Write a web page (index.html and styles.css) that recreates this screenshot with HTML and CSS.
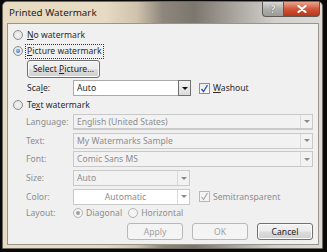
FILE: index.html
```html
<!DOCTYPE html>
<html>
<head>
<meta charset="utf-8">
<link rel="stylesheet" href="styles.css">
</head>
<body>
<div class="screen">
  <div class="window">
    <div class="titlebar">
      <span class="title">Printed Watermark</span>
      <div class="caption-btns">
        <span class="cbtn help">?</span>
        <span class="cbtn close">
          <svg width="10" height="8" viewBox="0 0 10 8"><path d="M1.5 1 L8.5 7 M8.5 1 L1.5 7" stroke="#fff" stroke-width="2.2" stroke-linecap="round"/></svg>
        </span>
      </div>
    </div>
    <div class="client">
      <div class="row r-no">
        <span class="radio"></span><span class="lbl"><u>N</u>o watermark</span>
      </div>
      <div class="row r-pic">
        <span class="radio on"></span><span class="lbl focus"><u>P</u>icture watermark</span>
      </div>
      <div class="indent">
        <button class="btn select">Select <u>P</u>icture...</button>
        <div class="row r-scale">
          <span class="flabel">Sca<u>l</u>e:</span>
          <div class="combo scale"><span class="ctext">Auto</span><span class="arrow boxed"><i></i></span></div>
          <span class="check on"><svg width="9" height="9" viewBox="0 0 9 9"><path d="M1.5 5 L3.5 7.5 L7.5 1" fill="none" stroke="#2a55b8" stroke-width="1.3"/></svg></span>
          <span class="lbl"><u>W</u>ashout</span>
        </div>
      </div>
      <div class="row r-text">
        <span class="radio"></span><span class="lbl">Te<u>x</u>t watermark</span>
      </div>
      <div class="fields">
        <span class="flabel dis">Language:</span>
        <div class="combo dis wide lang"><span class="ctext">English (United States)</span><span class="arrow"><i></i></span></div>
        <span class="flabel dis">Text:</span>
        <div class="combo dis wide"><span class="ctext">My Watermarks Sample</span><span class="arrow"><i></i></span></div>
        <span class="flabel dis">Font:</span>
        <div class="combo dis wide"><span class="ctext">Comic Sans MS</span><span class="arrow"><i></i></span></div>
        <span class="flabel dis">Size:</span>
        <div class="combo dis narrow"><span class="ctext">Auto</span><span class="arrow"><i></i></span></div>
        <span class="flabel dis">Color:</span>
        <div class="colorrow">
          <div class="combo dis narrow white"><span class="ctext center">Automatic</span><span class="arrow"><i></i></span></div>
          <span class="check dis"><svg width="9" height="9" viewBox="0 0 9 9"><path d="M1.5 5 L3.5 7.5 L7.5 1" fill="none" stroke="#a8a8a8" stroke-width="1.2"/></svg></span>
          <span class="lbl dis">Semitransparent</span>
        </div>
        <span class="flabel dis">Layout:</span>
        <div class="layoutrow">
          <span class="radio dis on"></span><span class="lbl dis">Diagonal</span>
          <span class="radio dis"></span><span class="lbl dis">Horizontal</span>
        </div>
      </div>
      <div class="actions">
        <button class="btn act dis">Apply</button>
        <button class="btn act dis">OK</button>
        <button class="btn act">Cancel</button>
      </div>
    </div>
  </div>
</div>
</body>
</html>
```
FILE: styles.css
```css
* { box-sizing: border-box; }
html, body { margin: 0; padding: 0; }
body {
  width: 327px; height: 252px; overflow: hidden;
  font-family: "Noto Sans", "Open Sans", sans-serif;
  font-size: 8.6px; line-height: 12px; color: #2a2a2a;
}
u { text-decoration: underline; text-underline-offset: 1px; }
.screen {
  width: 327px; height: 252px; background: #0a0a0a;
  padding: 1px 4px 3px 2px;
}
.window {
  width: 321px; height: 248px;
  border-radius: 5px 5px 0 0;
  background: linear-gradient(90deg, #e8dcc3 0%, #e6dac2 32%, #cfc3ad 42%, #8e877c 50%, #7b766e 60%, #a7a39c 72%, #d2d0cc 85%, #dcdbd8 100%);
  border: 1px solid #6e6a63;
  padding: 0 3px 3px 4px;
  display: flex; flex-direction: column;
}
.titlebar {
  height: 21px; flex: none;
  display: flex; align-items: flex-start; justify-content: space-between;
}
.title {
  font-size: 9.8px; color: #1d1d1d; margin: 5px 0 0 2px;
}
.caption-btns { display: flex; margin-right: -1px; }
.cbtn {
  height: 15px; display: flex; align-items: center; justify-content: center;
  border: 1px solid #5d5a56; border-top: none;
}
.help {
  width: 22px; border-radius: 0 0 0 4px;
  background: linear-gradient(#d8d8d8, #b0aeab 50%, #9e9c99);
  color: #eaeaea; font-weight: bold; font-size: 10px;
  text-shadow: 0 0 1px #333;
}
.close {
  width: 36px; border-left: none; border-radius: 0 0 4px 0;
  background: linear-gradient(#e9a591, #d0563a 50%, #bb3518);
}
.client {
  flex: 1;
  background: #f0f0f0;
  border: 1px solid #9a958c;
  padding: 5px 0 0 5px;
  display: flex; flex-direction: column;
}
.row { display: flex; align-items: center; }
.radio {
  width: 10px; height: 10px; border-radius: 50%;
  border: 1px solid #8e8f8f;
  background: radial-gradient(circle at 50% 50%, #f4f4f4 0%, #dcdcdc 100%);
  flex: none; margin-right: 4px; position: relative;
}
.radio.on::after {
  content: ""; position: absolute; left: 2px; top: 2px;
  width: 4px; height: 4px; border-radius: 50%;
  background: radial-gradient(circle at 40% 40%, #8ec6ff, #1d5fb5);
}
.radio.dis { border-color: #b5b5b5; background: #f4f4f4; }
.radio.dis.on::after { background: #a0a0a0; }
.r-no { height: 12px; }
.r-pic { height: 14px; margin-top: 3px; }
.focus { outline: 1px dotted #333; outline-offset: 0; padding: 0 1px; margin-left: -1px; line-height: 13px; }
.indent { padding-left: 14px; display: flex; flex-direction: column; }
.btn {
  font-family: inherit; font-size: 8.6px; line-height: 12px; color: #222;
  border: 1px solid #707070; border-radius: 3px;
  background: linear-gradient(#f2f2f2 0%, #ebebeb 48%, #dddddd 52%, #cfcfcf 100%);
  padding: 0; box-shadow: inset 0 0 0 1px #fbfbfb;
}
.select { width: 73px; height: 18px; margin-top: 2px; }
.r-scale { height: 16px; margin-top: 2px; }
.flabel { width: 46px; flex: none; }
.r-scale .flabel { width: 46px; }
.combo {
  height: 16px; display: flex; align-items: stretch;
  border: 1px solid #a9a9a9; background: #fff;
}
.combo .ctext { flex: 1; padding-left: 3px; line-height: 14px; white-space: nowrap; overflow: hidden; }
.combo .ctext.center { text-align: center; padding-left: 0; }
.arrow {
  width: 12px; flex: none; display: flex; align-items: center; justify-content: center;
  border-left: 1px solid #d0d0d0;
}
.arrow i {
  width: 0; height: 0; border-left: 3px solid transparent; border-right: 3px solid transparent;
  border-top: 3px solid #8a8a8a;
}
.arrow.boxed {
  border: 1px solid #707070; margin: -1px -1px -1px 0; width: 13px;
  background: linear-gradient(#f3f3f3, #dcdcdc);
}
.arrow.boxed i { border-top-color: #111; }
.scale { width: 118px; }
.check {
  width: 11px; height: 11px; border: 1px solid #8e8f8f; background: linear-gradient(#ededed, #fbfbfb);
  display: flex; align-items: center; justify-content: center; flex: none;
  margin: 0 3px 0 8px;
}
.check.dis { border-color: #b8b8b8; background: #f4f4f4; margin-left: 9px; }
.r-text { height: 12px; margin-top: 3px; }
.dis { color: #8d8d8d; }
.combo.dis { background: #f2f2f2; border-color: #c9c9c9; }
.combo.dis .arrow { border-left-color: #dadada; }
.combo.white { background: #fff; }
.fields {
  display: grid; grid-template-columns: 47px 1fr;
  row-gap: 2.7px; padding-left: 13px; padding-right: 5px;
  align-items: center; margin-top: 3px;
}
.fields .flabel { width: auto; }
.wide { width: 100%; }
.lang { border-bottom: 2px solid #9b9b9b; }
.narrow { width: 117px; }
.colorrow, .layoutrow { display: flex; align-items: center; }
.layoutrow { height: 12px; }
.layoutrow .radio { margin-left: 0; margin-right: 3px; }
.layoutrow .lbl { margin-right: 6px; }
.actions {
  display: flex; justify-content: flex-end; gap: 9px;
  padding-right: 5px; margin-top: 4px;
}
.act { width: 56px; height: 17px; }
.act.dis { color: #a0a0a0; border-color: #b8b8b8; background: #f4f4f4; box-shadow: none; }
```
